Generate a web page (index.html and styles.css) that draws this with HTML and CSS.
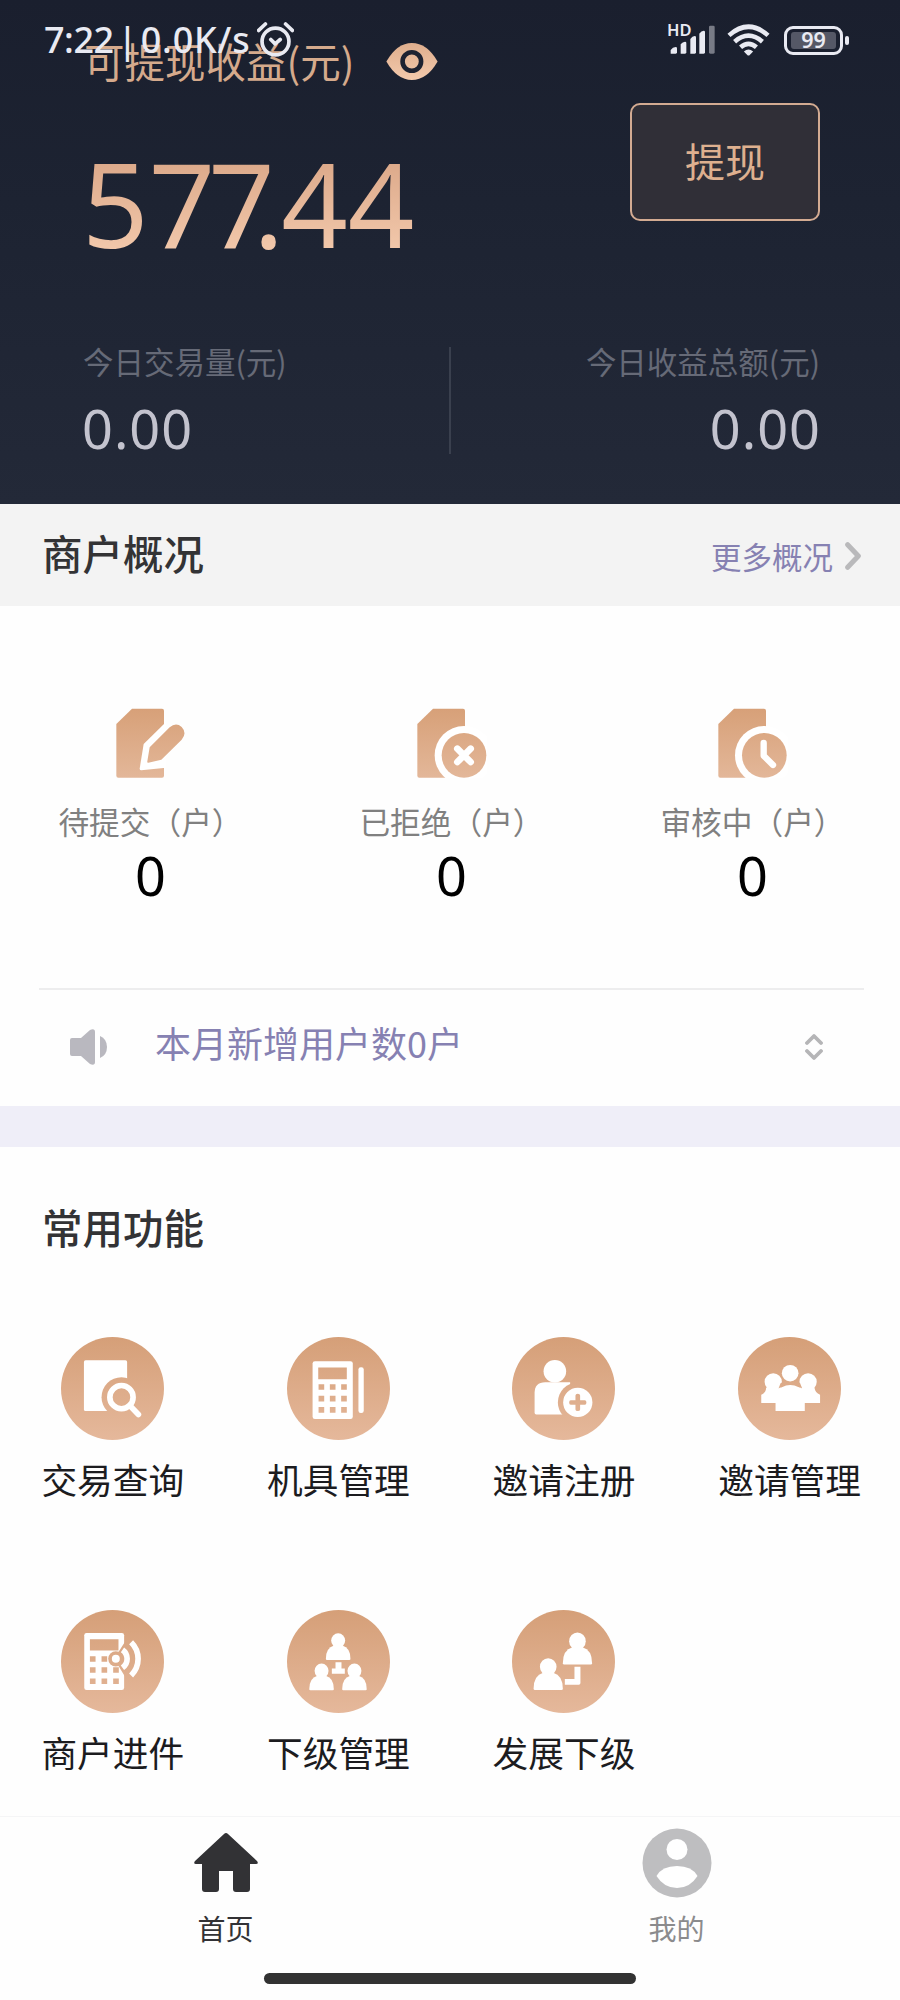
FILE: index.html
```html
<!DOCTYPE html>
<html lang="zh-CN">
<head>
<meta charset="utf-8">
<meta name="viewport" content="width=900">
<title>首页</title>
<link rel="stylesheet" href="styles.css">
</head>
<body>
<svg class="defs" width="0" height="0" aria-hidden="true">
  <defs>
    <linearGradient id="disc" gradientUnits="userSpaceOnUse" x1="0" y1="0" x2="0" y2="310">
      <stop offset="0" stop-color="#d59f78"/><stop offset="1" stop-color="#e5b89b"/>
    </linearGradient>
    <linearGradient id="doc" gradientUnits="userSpaceOnUse" x1="0" y1="0" x2="0" y2="210">
      <stop offset="0" stop-color="#d7a078"/><stop offset="1" stop-color="#e3b799"/>
    </linearGradient>
    <linearGradient id="eye" gradientUnits="userSpaceOnUse" x1="0" y1="0" x2="0" y2="112">
      <stop offset="0" stop-color="#dfae8d"/><stop offset="1" stop-color="#f3c9ac"/>
    </linearGradient>
    <g id="person">
      <ellipse cx="0" cy="0" rx="25" ry="26"/>
      <path d="M-15 18 H15 Q44 26 44 66 Q44 70 40 70 H-40 Q-44 70 -44 66 Q-44 26 -15 18Z"/>
    </g>
    <path id="sheet" d="M1 48 L48 2 H138 Q144 2 144 8 V203 Q144 209 138 209 H7 Q1 209 1 203Z"/>
  </defs>
</svg>

<div class="phone">
  <div class="status">
    <span class="clock">7:22 <span class="bar">|</span> <span class="speed">0.0K/s</span></span>
    <svg class="alarm" viewBox="0 0 110 104"><g fill="none" stroke="#e9eaf2" stroke-width="11" stroke-linecap="round" stroke-linejoin="round"><circle cx="55" cy="58" r="40"/><path d="M5 25 L25 6 M85 6 L105 25 M41 52 L54 65 L69 52"/></g></svg>
    <span class="spacer"></span>
    <span class="signal">
      <span class="hd">HD</span>
      <svg viewBox="0 0 138 90" width="46" height="30"><g fill="#e9eaf2"><path d="M2 86 V75 Q8 66 17 66 Q21 66 21 70 V82 Q21 86 17 86Z"/><path d="M32 86 V58 Q38 50 45 50 Q49 50 49 54 V82 Q49 86 45 86Z"/><path d="M61 86 V42 Q67 33 74 33 Q78 33 78 37 V82 Q78 86 74 86Z"/><path d="M88 86 V26 Q94 17 101 17 Q105 17 105 21 V82 Q105 86 101 86Z"/></g><rect x="117" y="2" width="17" height="84" rx="4" fill="#787b86"/></svg>
    </span>
    <svg class="wifi" viewBox="0 0 130 96"><g fill="none" stroke="#e9eaf2" stroke-width="14"><path d="M6 34 Q65 -18 124 34"/><path d="M23 53 Q65 17 107 53"/><path d="M41 70 Q65 49 89 70"/></g><path d="M51 83 Q65 71 79 83 L68 94 Q65 96 62 94Z" fill="#e9eaf2"/></svg>
    <span class="battery"><span class="level">99</span></span>
  </div>

  <header class="hero">
    <div class="hero-main">
      <div class="income">
        <div class="income-label">可提现收益(元)
          <svg class="eye" viewBox="0 0 157 112"><path fill="url(#eye)" d="M1 56 Q33 0 78 0 Q124 0 156 56 Q124 112 78 112 Q33 112 1 56Z"/><circle cx="78" cy="56" r="28" fill="none" stroke="#1d2231" stroke-width="14"/></svg>
        </div>
        <div class="income-value">5<span class="tight">7</span><span class="tighter">7</span><span class="point">.</span>44</div>
      </div>
      <button class="withdraw">提现</button>
    </div>
    <div class="today">
      <div class="today-item"><div class="today-label">今日交易量(元)</div><div class="today-value">0.00</div></div>
      <div class="today-line"></div>
      <div class="today-item end"><div class="today-label">今日收益总额(元)</div><div class="today-value">0.00</div></div>
    </div>
  </header>

  <div class="section-head">
    <h2>商户概况</h2>
    <a class="more">更多概况<svg viewBox="0 0 48 84" width="16" height="28"><path d="M8 8 L40 42 L8 76" fill="none" stroke="#b9b9bb" stroke-width="15" stroke-linecap="round" stroke-linejoin="round"/></svg></a>
  </div>

  <section class="stats">
    <div class="stat">
      <svg viewBox="0 0 210 210"><use href="#sheet" fill="url(#doc)"/><path d="M150 42 L83 108 L71 182 Q71 187 76 187 L150 179Z" fill="#fff"/><path fill="url(#doc)" d="M101 118 L161 58 Q180 42 197 57 Q214 75 197 95 L136 155 L97 164 Q93 165 94 160Z"/></svg>
      <div class="stat-label">待提交（户）</div><div class="stat-value">0</div>
    </div>
    <div class="stat">
      <svg viewBox="0 0 210 210"><use href="#sheet" fill="url(#doc)"/><circle cx="141" cy="142" r="88" fill="#fff"/><circle cx="141" cy="142" r="67" fill="url(#doc)"/><path d="M121 122 L161 162 M161 122 L121 162" stroke="#fff" stroke-width="20" stroke-linecap="round"/></svg>
      <div class="stat-label">已拒绝（户）</div><div class="stat-value">0</div>
    </div>
    <div class="stat">
      <svg viewBox="0 0 210 210"><use href="#sheet" fill="url(#doc)"/><circle cx="139" cy="142" r="88" fill="#fff"/><circle cx="139" cy="142" r="67" fill="url(#doc)"/><path d="M137 105 V143 L165 171" fill="none" stroke="#fff" stroke-width="19" stroke-linecap="round" stroke-linejoin="round"/></svg>
      <div class="stat-label">审核中（户）</div><div class="stat-value">0</div>
    </div>
  </section>

  <div class="notice">
    <svg class="speaker" viewBox="0 0 38 36"><path fill="#b9b8bf" d="M2 9 H11 L20 1 Q25 -1 25 3 V33 Q25 37 20 35 L11 27 H2 Q0 27 0 25 V11 Q0 9 2 9Z"/><path fill="#b9b8bf" d="M30 7 Q37 10 37 18 Q37 26 30 29Z"/></svg>
    <span class="notice-text">本月新增用户数0户</span>
    <svg class="updown" viewBox="0 0 18 28"><path d="M2 10 L9 3 L16 10 M2 18 L9 25 L16 18" fill="none" stroke="#b5b5b7" stroke-width="3.8" stroke-linecap="round" stroke-linejoin="round"/></svg>
  </div>

  <section class="features">
    <h2>常用功能</h2>
    <div class="grid">
      <div class="feature">
        <svg viewBox="0 0 310 310"><circle cx="155" cy="155" r="155" fill="url(#disc)"/><rect x="69" y="70" width="130" height="153" rx="5" fill="#fff"/><circle cx="182" cy="181" r="60" fill="url(#disc)"/><circle cx="182" cy="181" r="35" fill="none" stroke="#fff" stroke-width="17"/><path d="M207 206 L233 233" stroke="#fff" stroke-width="17" stroke-linecap="round"/></svg>
        <span>交易查询</span>
      </div>
      <div class="feature">
        <svg viewBox="0 0 310 310"><circle cx="155" cy="155" r="155" fill="url(#disc)"/><rect x="77" y="73" width="121" height="174" rx="7" fill="#fff"/><path fill="url(#disc)" d="M94 92h86v35h-86z M95 142h17v17h-17z M129 142h17v17h-17z M163 142h17v17h-17z M95 177h17v17h-17z M129 177h17v17h-17z M163 177h17v17h-17z M95 211h17v17h-17z M129 211h17v17h-17z M163 211h17v17h-17z"/><rect x="215" y="91" width="16" height="138" rx="7" fill="#fff"/></svg>
        <span>机具管理</span>
      </div>
      <div class="feature">
        <svg viewBox="0 0 310 310"><circle cx="155" cy="155" r="155" fill="url(#disc)"/><circle cx="129" cy="103" r="34" fill="#fff"/><path fill="#fff" d="M68 228 V168 Q68 136 100 136 H175 V233 H73 Q68 233 68 228Z"/><circle cx="198" cy="197" r="60" fill="url(#disc)"/><circle cx="198" cy="197" r="44" fill="#fff"/><path d="M177 190 H191 V176 Q191 171 198 171 Q205 171 205 176 V190 H219 Q224 190 224 197 Q224 204 219 204 H205 V218 Q205 223 198 223 Q191 223 191 218 V204 H177 Q172 204 172 197 Q172 190 177 190Z" fill="url(#disc)"/></svg>
        <span>邀请注册</span>
      </div>
      <div class="feature">
        <svg viewBox="0 0 310 310"><circle cx="155" cy="155" r="155" fill="url(#disc)"/><g fill="#fff"><circle cx="106" cy="135" r="26"/><circle cx="211" cy="135" r="26"/><path d="M85 152 H230 Q232 168 247 174 V199 H70 V174 Q84 168 85 152Z"/></g><path fill="url(#disc)" d="M128 139 Q157 124 187 139 L193 155 Q157 130 122 155Z"/><circle cx="157" cy="110" r="30" fill="url(#disc)"/><circle cx="157" cy="109" r="25" fill="#fff"/><path fill="#fff" d="M113 223 V175 Q128 169 132 151 Q157 138 183 151 Q187 169 201 175 V223Z"/></svg>
        <span>邀请管理</span>
      </div>
      <div class="feature">
        <svg viewBox="0 0 310 310"><circle cx="155" cy="155" r="155" fill="url(#disc)"/><rect x="70" y="69" width="120" height="172" rx="7" fill="#fff"/><path fill="url(#disc)" d="M87 88h86v34h-86z M87 139h17v17h-17z M122 139h17v17h-17z M87 172h17v17h-17z M122 172h17v17h-17z M157 172h17v17h-17z M87 206h17v17h-17z M122 206h17v17h-17z M157 206h17v17h-17z M160 147 L196 90 V206Z"/><circle cx="165" cy="147" r="23" fill="url(#disc)"/><circle cx="165" cy="147" r="12" fill="#fff"/><path d="M185 120 A33 33 0 0 1 185 174 M211 97 A70 70 0 0 1 211 197" fill="none" stroke="#fff" stroke-width="17"/></svg>
        <span>商户进件</span>
      </div>
      <div class="feature">
        <svg viewBox="0 0 310 310"><circle cx="155" cy="155" r="155" fill="url(#disc)"/><g fill="#fff"><use href="#person" transform="translate(154 92) scale(.84)"/><use href="#person" transform="translate(104 183) scale(.84)"/><use href="#person" transform="translate(203 183) scale(.84)"/><path d="M146 157h18v19h10v16h-39v-16h11z"/></g></svg>
        <span>下级管理</span>
      </div>
      <div class="feature">
        <svg viewBox="0 0 310 310"><circle cx="155" cy="155" r="155" fill="url(#disc)"/><g fill="#fff"><use href="#person" transform="translate(197 94)"/><use href="#person" transform="translate(109 171)"/><path d="M188 171h18v49q0 5 -5 5h-42v-17h29z"/></g></svg>
        <span>发展下级</span>
      </div>
    </div>
  </section>

  <nav class="tabs">
    <a class="tab active"><svg viewBox="0 0 70 70"><path fill="#323235" d="M33 6 Q35 4 37 6 L66 33 Q68 36 65 36 H59 V61 Q59 64 56 64 H45 Q42 64 42 61 V43 H28 V61 Q28 64 25 64 H14 Q11 64 11 61 V36 H5 Q2 36 4 33Z"/></svg><span>首页</span></a>
    <a class="tab"><svg viewBox="0 0 70 70"><circle cx="35" cy="35" r="34.5" fill="#bebec0"/><circle cx="35" cy="21.500" r="10.500" fill="#fff"/><path fill="#fff" d="M14.500 48 Q20 38 35 38 Q50 38 55.500 48 Q48 60 35 60 Q22 60 14.500 48Z"/></svg><span>我的</span></a>
  </nav>
  <div class="home-bar"></div>
</div>
</body>
</html>
```
FILE: styles.css
```css
* { box-sizing: border-box; }
body {
  margin: 0;
  background: #fefefe;
  font-family: "Noto Sans CJK SC", "Noto Sans", sans-serif;
  color: #333;
}
h2 { margin: 0; font-size: 40.5px; line-height: 56px; font-weight: 500; color: #333335; }
svg { display: block; flex: none; }
.defs { position: absolute; }
.phone { position: relative; width: 900px; height: 2000px; overflow: hidden; display: flex; flex-direction: column; }

/* system status bar floats above the scrolled page */
.status {
  position: absolute; inset: 0 0 auto 0; z-index: 2; height: 80px;
  padding: 0 51px 0 44px; display: flex; align-items: center;
  color: #e9eaf2; font-family: "Noto Sans", sans-serif;
}
.clock { width: 213px; font-size: 36px; font-weight: 500; line-height: 80px; white-space: pre; letter-spacing: -.5px; }
.bar { margin: 0 -5px; }
.speed { letter-spacing: .8px; }
.alarm { width: 37px; height: 35px; margin-top: -2px; }
.spacer { flex: 1; }
.signal { position: relative; height: 30px; width: 46px; margin-right: 11px; }
.hd { position: absolute; left: -3px; top: -3px; font-size: 16.500px; line-height: 16px; font-weight: 600; }
.wifi { width: 43px; height: 32px; margin-right: 14px; }
.battery { position: relative; width: 59px; height: 29px; padding: 3px 4px; border: 3px solid #e9eaf2; border-radius: 9px; margin-right: 6px; }
.battery::after { content: ""; position: absolute; right: -9px; top: 7px; width: 4px; height: 9px; border-radius: 2px; background: #e9eaf2; }
.level { display: block; height: 17px; border-radius: 3px; background: #555866; font-size: 21.500px; line-height: 16px; font-weight: 600; text-align: center; }

.hero { height: 504px; padding: 31px 80px 0 83px; background: linear-gradient(#1a1f2e, #1d2332 40%, #232938); }
.hero-main { display: flex; justify-content: space-between; height: 310px; }
.income-label { display: flex; align-items: center; gap: 32px; padding-left: 1px; font-size: 40.5px; line-height: 60px; color: #d5aa8c; white-space: nowrap; }
.eye { width: 52px; height: 37px; margin-top: 1px; }
.income-value {
  margin: 52px 0 0 -1px; font: 400 116.500px/120px "Noto Sans", sans-serif; letter-spacing: 0;
  background: linear-gradient(#dca98a 15%, #f2c8ab 90%); -webkit-background-clip: text; background-clip: text; color: transparent;
}
.tight { letter-spacing: -7px; }
.tighter { letter-spacing: -22px; }
.point { letter-spacing: -3px; }
.withdraw {
  width: 190px; height: 118px; margin-top: 72px; padding: 0 0 4px;
  border: 2.500px solid #d3ab92; border-radius: 10px; background: #302f37;
  font: 400 40px/56px "Noto Sans CJK SC", sans-serif; color: #deb08f;
}
.today { display: flex; justify-content: space-between; }
.today-item { width: 350px; }
.end { text-align: right; }
.today-label { font-size: 30.500px; line-height: 40px; color: #666a77; }
.today-value { margin: 17px -1px 0 -1px; font: 400 54px/60px "Noto Sans", sans-serif; letter-spacing: 1px; color: #c3c3ce; }
.today-line { width: 2px; height: 107px; margin: 6px 3px 0 0; background: #3a404e; }

.section-head { height: 102px; padding: 0 39px 5px 42px; background: #f3f3f3; display: flex; align-items: center; justify-content: space-between; }
.more { display: flex; align-items: center; gap: 12px; padding-top: 7px; font-size: 30.500px; line-height: 40px; color: #8681b2; }

.stats { height: 382px; padding-top: 102px; display: grid; grid-template-columns: repeat(3, 301px); }
.stat { display: flex; flex-direction: column; align-items: center; }
.stat svg { width: 70px; height: 70px; }
.stat-label { margin-top: 23px; font-size: 30.700px; line-height: 40px; color: #808080; }
.stat-value { margin-top: 4px; font: 400 54px/60px "Noto Sans", sans-serif; color: #000; }

.notice { height: 118px; margin: 0 36px 0 39px; padding: 0 41px 12px 31px; border-top: 2px solid #ededee; display: flex; align-items: center; }
.speaker { width: 38px; height: 36px; margin-top: 10px; }
.notice-text { flex: 1; margin-left: 47px; font-size: 36px; line-height: 50px; color: #8681b2; }
.updown { width: 18px; height: 28px; margin-top: 9px; }

.features { height: 710px; border-top: 41px solid #efeef8; padding-top: 52px; }
.features h2 { padding-left: 42px; }
.grid { margin-top: 82px; display: grid; grid-template-columns: repeat(4, 225.600px); grid-auto-rows: 273px; }
.feature { display: flex; flex-direction: column; align-items: center; font-size: 35.700px; line-height: 44px; color: #1c1c1f; }
.feature svg { width: 103px; height: 103px; margin-bottom: 17px; }

.tabs { height: 157px; padding-top: 11px; border-top: 1px solid #f5f5f6; display: grid; grid-template-columns: repeat(2, 451px); }
.tab { display: flex; flex-direction: column; align-items: center; font-size: 28px; line-height: 36px; color: #8b8b8d; }
.tab svg { width: 70px; height: 70px; margin-bottom: 12px; }
.active { color: #323235; }
.home-bar { width: 372px; height: 11px; margin-left: 264px; border-radius: 6px; background: #323232; }
```
